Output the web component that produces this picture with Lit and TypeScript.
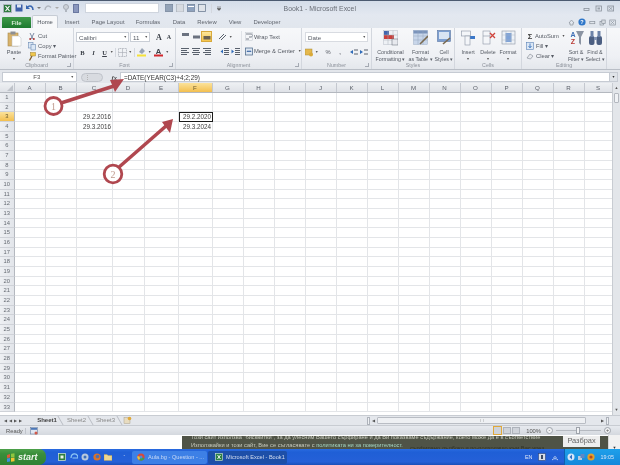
import { LitElement, html, css, svg } from "lit";
import { customElement } from "lit/decorators.js";

const COLS: [string, number][] = [["A",31],["B",31],["C",36],["D",32],["E",34],["F",34],["G",31],["H",31],["I",31],["J",31],["K",31],["L",31],["M",31],["N",31],["O",31],["P",31],["Q",31],["R",31],["S",28]];
const ROWS = Array.from({length:33},(_,i)=>i+1);

@customElement("app-root")
export class AppRoot extends LitElement {
  static styles = css`
    :host { display:block; width:620px; height:465px; overflow:hidden; position:relative; font-family:"Liberation Sans",Arial,sans-serif; font-size:5.8px; color:#555a63; background:#e4e8ee; }
    .shot { width:620px; height:465px; display:flex; flex-direction:column; filter:blur(.3px); }
    svg { display:block; flex:none; }
    .title { height:15px; flex:none; background:linear-gradient(#d4dde9,#e3e8f0); border-top:1px solid #4b5a70; box-sizing:border-box; display:grid; grid-template-columns:1fr 1fr 1fr; align-items:center; padding:0 4px 0 3px; }
    .qat { display:flex; align-items:center; gap:3px; }
    .qatbox { width:72px; height:8px; background:#fff; border:1px solid #cfd5de; margin:0 3px 0 3px; flex:none; }
    .titletext { text-align:center; font-size:6.9px; color:#6a6f78; white-space:nowrap; }
    .winbtns { display:flex; justify-content:flex-end; gap:5px; padding-right:2px; }
    .tabs { height:13px; flex:none; display:flex; align-items:flex-end; background:linear-gradient(#e3e8f0,#e1e6ed); position:relative; font-size:5.9px; }
    .tab { height:13px; display:flex; align-items:center; justify-content:center; color:#5f646d; flex:none; }
    .file { width:29px; background:linear-gradient(#3f9a4a,#1d7a2f); color:#d8eeda; margin:1px 1px 0 2px; height:11px; border-radius:1px 1px 0 0; font-weight:700; }
    .tab.on { background:#f7f8fa; width:26px; border:1px solid #c6ccd5; border-bottom:none; box-sizing:border-box; color:#50555e; border-radius:2px 2px 0 0; }
    .w28 { width:28px; } .w44 { width:44px; } .w36 { width:36px; } .w26 { width:26px; } .w30 { width:30px; } .w38 { width:38px; }
    .tabicons { position:absolute; right:4px; top:3px; display:flex; gap:3px; align-items:center; }
    .ribbon { height:42px; flex:none; display:flex; background:linear-gradient(#f7f8fa,#eef0f4 70%,#e4e7ec); border-bottom:1px solid #b9bec6; box-sizing:border-box; }
    .group { position:relative; border-right:1px solid #d3d7de; flex:none; box-sizing:border-box; display:flex; flex-direction:column; }
    .g-clip { width:74px; } .g-font { width:102px; } .g-align { width:126px; } .g-num { width:70px; } .g-styles { width:83px; } .g-cells { width:67px; } .g-edit { width:85px; }
    .gbody { flex:1; display:flex; min-height:0; padding:2px 0 0; }
    .glabel { height:8px; flex:none; text-align:center; font-size:5.3px; color:#8b9099; line-height:8px; }
    .launch { position:absolute; right:2px; bottom:2px; width:3px; height:3px; border-right:1px solid #a4a9b2; border-bottom:1px solid #a4a9b2; }
    .stack { display:flex; flex-direction:column; flex:none; }
    .row { display:flex; align-items:center; white-space:nowrap; height:10px; flex:none; }
    .big { display:flex; flex-direction:column; align-items:center; text-align:center; line-height:7px; white-space:nowrap; font-size:5.3px; flex:none; }
    .big svg { margin-bottom:3px; }
    .big .arr { line-height:7px; }
    .paste { width:20px; margin:1px 4px 0 4px; font-size:5.6px; }
    .paste svg { margin-bottom:0; }
    .paste span:first-of-type { margin-top:2px; }
    .clipstack { width:44px; padding-top:1px; }
    .clipstack .row svg { margin-right:2px; }
    .font-body { padding:4px 0 0 2px; }
    .combo { height:10px; background:#fff; border:1px solid #c9ced6; box-sizing:border-box; display:flex; align-items:center; justify-content:space-between; padding:0 1px 0 2px; font-size:6.2px; flex:none; }
    .c-font { width:53px; } .c-size { width:20px; margin:0 1px 0 1px; }
    .c-num { width:63px; border-color:#d8dbe1; }
    .arr { font-size:3.5px; color:#555; }
    .b { font-weight:700; font-size:6.5px; width:11px; text-align:center; color:#3b4048; font-family:"Liberation Serif",serif; flex:none; }
    .ga { font-weight:700; color:#3b4048; flex:none; width:10px; text-align:center; font-family:"Liberation Serif",serif; }
    .ga1 { font-size:8px; margin-left:3px; } .ga2 { font-size:6px; }
    .font-r2 { margin-top:5px; padding-left:1px; }
    .sep { width:1px; height:9px; background:#d3d7de; margin:0 2px; flex:none; }
    .mr3 { margin-right:3px; } .mr2 { margin-right:2px; } .ml1 { margin-left:1px; } .ml3 { margin-left:3px; } .ml6 { margin-left:6px; }
    .hl { background:linear-gradient(#fde79b,#f5c54e); border:1px solid #d8a93c; box-sizing:border-box; }
    .al-body { padding:3px 0 0 5px; }
    .al-stack { width:60px; }
    .al-r1 { height:11px; }
    .al-r2 { height:10px; margin-top:4px; }
    .al-hl { width:11px; height:11px; display:flex; align-items:flex-end; justify-content:center; padding-bottom:1px; margin:0 6px 0 1px; flex:none; }
    .al-vsep { width:1px; height:28px; background:#dfe2e7; margin:0 2px 0 0; flex:none; }
    .wrapstack { padding-left:1px; }
    .wrapstack .row { height:11px; }
    .wrapstack .row + .row { height:10px; margin-top:4px; }
    .wrapstack svg { margin-right:1px; }
    .num-body { padding:4px 0 0 3px; }
    .num-r { margin-top:5px; }
    .pct { margin-left:5px; width:9px; flex:none; text-align:center; }
    .comma { margin-left:3px; width:9px; flex:none; font-weight:700; text-align:center; }
    .styles-body { padding:2px 0 0 3px; }
    .s1 { width:31px; } .s2 { width:29px; } .s3 { width:18px; }
    .cells-body { padding:2px 0 0 3px; }
    .cw { width:20px; }
    .ed-body { padding:3px 0 0 4px; }
    .ed-stack { width:41px; }
    .sig { font-size:7.5px; color:#333; width:8px; text-align:center; flex:none; font-weight:700; }
    .ed-stack svg { margin-right:1px; }
    .ed-stack .row svg { width:8px; }
    .ed-big { width:18px; margin-top:-1px; } .ed-big2 { width:20px; margin-top:-1px; }
    .fbar { height:13px; flex:none; display:flex; align-items:center; background:#e3e6eb; padding-top:1px; box-sizing:border-box; }
    .namebox { width:75px; height:10px; margin-left:2px; background:#fff; border:1px solid #c6cbd3; box-sizing:border-box; display:flex; align-items:center; justify-content:space-between; padding:0 2px 0 0; flex:none; }
    .namebox span:first-child { flex:1; text-align:center; font-size:6px; color:#555; }
    .fxzone { width:43px; height:10px; display:flex; align-items:center; justify-content:space-between; padding:0 3px 0 4px; box-sizing:border-box; color:#444; font-family:"Liberation Serif",serif; font-style:italic; font-weight:700; font-size:6.5px; flex:none; }
    .pill { width:22px; height:9px; border-radius:5px; background:#d8dbe0; border:1px solid #bfc3ca; box-sizing:border-box; color:#aaa; font-style:normal; font-size:5px; padding-left:3px; line-height:7px; }
    .formula { flex:1; height:10px; background:#fff; border:1px solid #c6cbd3; box-sizing:border-box; font-size:6.4px; color:#333; display:flex; align-items:center; padding-left:3px; justify-content:space-between; margin-right:2px; }
    .fscroll { width:7px; height:8px; background:#dfe3e8; border-left:1px solid #c6cbd3; font-size:3.5px; text-align:center; line-height:8px; }
    .sheetwrap { display:flex; height:332px; flex:none; background:#fff; }
    .gridcol { width:612px; flex:none; display:flex; flex-direction:column; }
    .heads { display:flex; height:10px; flex:none; background:linear-gradient(#eef0f3,#dfe2e7); border-bottom:1px solid #b4b8bf; box-sizing:border-box; }
    .corner { width:14.5px; flex:none; border-right:1px solid #c4c8cf; box-sizing:border-box; position:relative; }
    .corner::after { content:""; position:absolute; right:1px; bottom:1px; border-left:6px solid transparent; border-bottom:6px solid #bfc3ca; }
    .ch { flex:none; text-align:center; line-height:9px; font-size:6.2px; color:#5a5f68; border-right:1px solid #c4c8cf; box-sizing:border-box; }
    .ch.sel { background:linear-gradient(#fbe29a,#f3bf4f); color:#6b5a2c; }
    .rows { flex:none; display:flex; flex-direction:column; }
    .r { display:flex; height:9.68px; flex:none; }
    .rh { width:14.5px; flex:none; background:linear-gradient(90deg,#eef0f3,#e2e5ea); border-right:1px solid #b4b8bf; border-bottom:1px solid #cfd2d8; box-sizing:border-box; text-align:center; font-size:5.8px; line-height:9.4px; color:#666b73; }
    .rh.sel { background:linear-gradient(#fbe29a,#f3bf4f); color:#6b5a2c; }
    .c { flex:none; border-right:1px solid #e3e5e8; border-bottom:1px solid #e3e5e8; box-sizing:border-box; font-size:6.3px; line-height:9.4px; color:#3c3c3c; text-align:right; padding-right:.5px; white-space:nowrap; }
    .c.active { outline:1.4px solid #1c1c1c; outline-offset:-1px; }
    .vscroll { width:8px; flex:none; background:#e3e6ea; display:flex; flex-direction:column; border-left:1px solid #c8ccd2; box-sizing:border-box; }
    .vup { height:10px; text-align:center; font-size:4px; line-height:10px; color:#555; flex:none; }
    .vthumb { height:10px; margin:0 1px; background:#f0f2f5; border:1px solid #b4b8bf; box-sizing:border-box; flex:none; border-radius:1px; }
    .vfill { flex:1; }
    .tabsrow { height:10px; flex:none; display:flex; align-items:center; background:#e4e7ec; border-top:1px solid #c8ccd2; box-sizing:border-box; font-size:6px; color:#777; }
    .nav { width:34px; letter-spacing:2px; font-size:3.6px; padding-left:4px; box-sizing:border-box; color:#555; flex:none; }
    .sh { width:29px; text-align:center; flex:none; color:#8a8a8a; position:relative; height:9px; line-height:9px; }
    .sh::after { content:""; position:absolute; right:0; top:0; height:9px; border-right:1px solid #b9bdc4; transform:skewX(30deg); }
    .sh.on { color:#444; font-weight:700; width:28px; margin-left:-1px; margin-right:1px; }
    .tabicon { margin-left:3px; }
    .hscroll { margin-left:235px; display:flex; align-items:center; flex:none; width:244px; }
    .split { width:3px; height:8px; background:#eef0f3; border:1px solid #aeb3bb; box-sizing:border-box; flex:none; }
    .harr { width:7px; text-align:center; flex:none; }
    .hthumb { width:209px; height:7px; background:#eef0f3; border:1px solid #b9bdc4; box-sizing:border-box; border-radius:1px; text-align:center; font-size:3px; line-height:5px; color:#888; flex:none; }
    .hgap { width:13px; flex:none; }
    .status { height:10px; flex:none; display:flex; align-items:center; background:linear-gradient(#e7eaef,#d4d8de); border-top:1px solid #c8ccd2; box-sizing:border-box; font-size:5.8px; color:#555; }
    .ready { width:26px; padding-left:6px; box-sizing:border-box; flex:none; border-right:1px solid #c0c4cb; }
    .macro { padding-left:4px; }
    .zoomzone { margin-left:auto; display:flex; align-items:center; gap:1px; padding-right:9px; }
    .vb { width:8px; height:7px; background:#cfd3da; border:1px solid #aeb3bb; box-sizing:border-box; }
    .vb.hl { width:9px; height:9px; border-color:#e0a93a; }
    .pctz { margin:0 4px 0 5px; }
    .slider { width:45px; height:1px; background:#b5b9c0; position:relative; margin:0 2px; }
    .slider::after { content:""; position:absolute; left:20px; top:-3px; width:4px; height:7px; background:#f2f3f5; border:1px solid #9ea3ab; box-sizing:border-box; }
    .round { width:7px; height:7px; border-radius:50%; background:#f0f1f3; border:1px solid #9ea3ab; box-sizing:border-box; text-align:center; line-height:4.5px; font-size:5.5px; }
    .browser { height:15px; flex:none; background:#fff; display:flex; justify-content:flex-end; margin-bottom:-1px; }
    .banner { width:426px; margin-top:1px; flex:none; background:#4f5346; color:#c7cabd; font-size:5.7px; line-height:7px; padding:0 0 0 9px; box-sizing:border-box; position:relative; overflow:hidden; white-space:nowrap; }
    .banner p { margin:0; }
    .banner .t { margin-top:-2px; }
    .banner .m { margin-top:1px; }
    .banner a { color:#a4d6c2; }
    .ghost { position:absolute; left:228px; top:9px; color:#2f3229; }
    .razb { position:absolute; right:8px; top:0; width:37px; height:11px; background:#eeeeee; color:#666; font-size:7.4px; text-align:center; line-height:10px; }
    .bscroll { width:12px; flex:none; background:#f1f1f1; border-left:1px solid #d5d5d5; box-sizing:border-box; font-size:4px; line-height:26px; text-align:center; color:#333; }
    .taskbar { height:16px; flex:none; display:flex; align-items:center; background:linear-gradient(#2a6be0,#1f5fd6 20%,#2560d8 80%,#1a4fb8); color:#dbe6f8; position:relative; }
    .start { width:46px; height:16px; flex:none; background:linear-gradient(#4da14a,#3a8e3a 30%,#2f8133); border-radius:0 7px 7px 0; box-sizing:border-box; display:flex; align-items:center; gap:3px; padding-left:6px; color:#eef6ea; font-style:italic; font-weight:700; font-size:9px; }
    .ql { display:flex; align-items:center; gap:3.5px; margin-left:12px; width:74px; flex:none; }
    .caret { margin-left:8px; font-size:5px; color:#a9c2ee; }
    .tb { height:13px; flex:none; display:flex; align-items:center; gap:3px; font-size:5.6px; padding-left:5px; box-sizing:border-box; border-radius:2px; white-space:nowrap; }
    .tb.a { width:75px; background:#3d80e6; margin-right:1px; color:#c8d8f5; }
    .tb.b2 { width:79px; background:#1d4fa8; color:#d5def0; padding-left:7px; }
    .tray { margin-left:auto; height:16px; display:flex; align-items:center; gap:5px; font-size:5.4px; }
    .trayin { height:16px; display:flex; align-items:center; gap:2px; background:linear-gradient(#1ea0ea,#1487db); padding:0 6px 0 2px; border-left:1px solid #0e5fb0; }
    .clock { margin-left:4px; }
    .overlay { position:absolute; left:0; top:0; width:620px; height:465px; pointer-events:none; filter:blur(.3px); }
    .num { font-family:"Liberation Serif",serif; font-size:10px; fill:#bf9a8e; text-anchor:middle; }
  `;

  ic(inner: unknown, w = 10, h = 10) {
    return html`<svg width=${w} height=${h} viewBox="0 0 ${w} ${h}">${inner}</svg>`;
  }

  render() {
    return html`
    <div class="shot">
      <div class="title">
        <div class="qat">
          ${this.ic(svg`<rect x=".5" y=".5" width="8" height="8" fill="#2c7a3e" stroke="#aeb7c0"/><path d="M2.5 2l4 5M6.5 2l-4 5" stroke="#fff" stroke-width="1.2"/>`,9,9)}
          ${this.ic(svg`<rect x=".5" y=".5" width="7" height="7" fill="#3d5fa8"/><rect x="2" y=".5" width="4" height="3" fill="#dfe7f2"/>`,8,8)}
          ${this.ic(svg`<path d="M1 3.5c3-3 6-1 6 2.5" fill="none" stroke="#3765b0" stroke-width="1.6"/><path d="M0 1v4h4z" fill="#3765b0"/>`,8,8)}
          ${this.ic(svg`<path d="M0 1h4L2 3z" fill="#777"/>`,4,4)}
          ${this.ic(svg`<path d="M7 3.5c-3-3-6-1-6 2.5" fill="none" stroke="#b0b6bf" stroke-width="1.4"/>`,8,8)}
          ${this.ic(svg`<path d="M0 1h4L2 3z" fill="#aaa"/>`,4,4)}
          ${this.ic(svg`<circle cx="4" cy="3" r="2.5" fill="#cdd2d9" stroke="#a5abb4"/><rect x="3" y="5" width="2" height="3" fill="#b0b6bf"/>`,8,8)}
          ${this.ic(svg`<rect x=".5" y=".5" width="5" height="8" fill="#8a97bd" stroke="#6a78a0"/>`,6,9)}
          <div class="qatbox"></div>
          ${this.ic(svg`<rect width="8" height="7" y=".5" fill="#93a3b8" stroke="#6f7f95" stroke-width=".7"/>`,8,8)}
          ${this.ic(svg`<rect width="7" height="8" x=".5" fill="#d7dbe1" stroke="#a9afb8" stroke-width=".7"/>`,8,8)}
          ${this.ic(svg`<rect width="8" height="7" y=".5" fill="#8ea2be" stroke="#6f7f95" stroke-width=".7"/><rect x="1" y="2" width="6" height="1" fill="#fff"/>`,8,8)}
          ${this.ic(svg`<rect width="7" height="7" x=".5" y=".5" fill="#dfe3e9" stroke="#6f7f95" stroke-width=".8"/>`,8,8)}
          <div class="sep"></div>
          ${this.ic(svg`<path d="M0 2h4M0 3.4l2 2 2-2z" fill="#555" stroke="#555" stroke-width=".5"/>`,4,6)}
        </div>
        <div class="titletext">Book1 - Microsoft Excel</div>
        <div class="winbtns">
          ${this.ic(svg`<rect x="1" y="3.5" width="5" height="2" fill="none" stroke="#8a929c" stroke-width=".8"/>`,7,7)}
          ${this.ic(svg`<rect x="1" y="1" width="5.5" height="5" fill="none" stroke="#8a929c" stroke-width=".8"/><rect x="2.5" y="2.5" width="2.5" height="2" fill="#9aa2ac"/>`,7,7)}
          ${this.ic(svg`<rect x=".8" y="1" width="5.8" height="5" fill="none" stroke="#8a929c" stroke-width=".8"/><path d="M2 2l3.5 3M5.5 2l-3.5 3" stroke="#8a929c" stroke-width=".7"/>`,7,7)}
        </div>
      </div>
      <div class="tabs">
        <div class="tab file">File</div>
        <div class="tab on">Home</div>
        <div class="tab w28">Insert</div>
        <div class="tab w44">Page Layout</div>
        <div class="tab w36">Formulas</div>
        <div class="tab w26">Data</div>
        <div class="tab w30">Review</div>
        <div class="tab w26">View</div>
        <div class="tab w38">Developer</div>
        <div class="tabicons">
          ${this.ic(svg`<path d="M3.5 1L1 4h1v2h3V4h1z" fill="none" stroke="#8a929c" stroke-width=".7"/>`,7,7)}
          ${this.ic(svg`<circle cx="4" cy="4" r="3.6" fill="#2e76c9"/><text x="4" y="6" font-size="5.5" font-weight="700" fill="#fff" text-anchor="middle" font-family="Liberation Sans">?</text>`,8,8)}
          ${this.ic(svg`<rect x=".8" y="2.5" width="5" height="2.2" fill="none" stroke="#8a929c" stroke-width=".7"/>`,7,7)}
          ${this.ic(svg`<rect x="1" y="2.5" width="3.5" height="3.5" fill="none" stroke="#8a929c" stroke-width=".7"/><rect x="2.8" y="1" width="3.4" height="3.4" fill="#d8dce2" stroke="#8a929c" stroke-width=".7"/>`,7,7)}
          ${this.ic(svg`<rect x=".8" y="1" width="5.5" height="5" fill="none" stroke="#8a929c" stroke-width=".7"/><path d="M2 2l3 3M5 2l-3 3" stroke="#8a929c" stroke-width=".6"/>`,7,7)}
        </div>
      </div>
      <div class="ribbon">
        <div class="group g-clip">
          <div class="gbody">
            <div class="big paste">
              ${this.ic(svg`<rect x="1" y="2" width="10" height="13" fill="#d8b36c" stroke="#a98a4e" stroke-width=".6"/><rect x="3.5" y="0.5" width="5" height="3" fill="#8d8f94"/><path d="M5 5h7l2 2v8H5z" fill="#fff" stroke="#b8bcc2" stroke-width=".5"/>`,15,16)}
              <span>Paste</span><span class="arr">▼</span>
            </div>
            <div class="stack clipstack">
              <div class="row">${this.ic(svg`<path d="M2 1l3 6M6 1L3 7" stroke="#6f7f9c" stroke-width=".9"/><circle cx="2.2" cy="7" r="1" fill="#a33"/><circle cx="5.8" cy="7" r="1" fill="#a33"/>`,8,9)}<span>Cut</span></div>
              <div class="row">${this.ic(svg`<rect x=".5" y=".5" width="4.5" height="5.5" fill="#dbe7f5" stroke="#6d8cb5" stroke-width=".6"/><rect x="3" y="2.5" width="4.5" height="5.5" fill="#dbe7f5" stroke="#6d8cb5" stroke-width=".6"/>`,8,9)}<span>Copy ▾</span></div>
              <div class="row">${this.ic(svg`<rect x="2.5" y=".5" width="5" height="3.5" fill="#f0c64c" stroke="#a3842a" stroke-width=".5"/><path d="M4 4L1.5 8.5" stroke="#7b5b2c" stroke-width="1.3"/>`,8,9)}<span>Format Painter</span></div>
            </div>
          </div>
          <div class="glabel">Clipboard</div><div class="launch"></div>
        </div>
        <div class="group g-font">
          <div class="gbody font-body">
            <div class="stack">
              <div class="row">
                <div class="combo c-font"><span>Calibri</span><span class="arr">▼</span></div>
                <div class="combo c-size"><span>11</span><span class="arr">▼</span></div>
                <span class="ga ga1">A</span><span class="ga ga2">A</span>
              </div>
              <div class="row font-r2">
                <span class="b">B</span><span class="b"><i>I</i></span><span class="b"><u>U</u></span><span class="arr">▼</span><div class="sep"></div>
                ${this.ic(svg`<rect x=".5" y=".5" width="8" height="8" fill="none" stroke="#a4a9b2" stroke-dasharray="1 .6" stroke-width=".8"/><path d="M4.5 .5v8M.5 4.5h8" stroke="#a4a9b2" stroke-width=".6"/>`,9,9)}
                <span class="arr ml1">▼</span><div class="sep"></div>
                ${this.ic(svg`<path d="M2 5l3-4 3 3-3 3z" fill="#9aa5b5"/><rect x="0" y="7.5" width="9" height="2" fill="#f5e23a"/>`,10,10)}
                <span class="arr ml1 mr3">▼</span>
                ${this.ic(svg`<text x="4.5" y="7" font-size="7.5" font-weight="700" fill="#3c4048" text-anchor="middle" font-family="Liberation Sans">A</text><rect x="0" y="7.5" width="9" height="2" fill="#d2262c"/>`,10,10)}
                <span class="arr ml1">▼</span>
              </div>
            </div>
          </div>
          <div class="glabel">Font</div><div class="launch"></div>
        </div>
        <div class="group g-align">
          <div class="gbody al-body">
            <div class="stack al-stack">
              <div class="row al-r1">
                ${this.ic(svg`<rect x="1" y="1" width="7" height="3" fill="#6b7280"/>`,8,10)}
                <span class="ml3"></span>
                ${this.ic(svg`<rect x="1" y="3.5" width="7" height="3" fill="#6b7280"/>`,8,10)}
                <div class="hl al-hl ml1">${this.ic(svg`<rect x=".5" y="2" width="7" height="3.5" fill="#6b6252"/>`,8,6)}</div>
                ${this.ic(svg`<path d="M1 7l5-5M3 8l5-5" stroke="#59616d" stroke-width="1"/>`,10,9)}<span class="arr ml1">▼</span>
              </div>
              <div class="row al-r2">
                ${[0,1,2].map(i=>html`${this.ic(svg`<path d="M0 1.5h8M${i==0?0:i==1?1:2} 3.5h6M0 5.5h8M${i==0?0:i==1?1:2} 7.5h6" stroke="#59616d" stroke-width="1"/>`,8,9)}<span class="ml3"></span>`)}
                <span class="ml6"></span>
                ${this.ic(svg`<path d="M4 1.5h5M4 3.5h5M4 5.5h5M4 7.5h5" stroke="#59616d" stroke-width="1"/><path d="M3 2.5L.5 4.5 3 6.5z" fill="#2f6bb8"/>`,10,9)}
                <span class="ml1"></span>
                ${this.ic(svg`<path d="M4 1.5h5M4 3.5h5M4 5.5h5M4 7.5h5" stroke="#59616d" stroke-width="1"/><path d="M.5 2.5L3 4.5.5 6.5z" fill="#2f6bb8"/>`,10,9)}
              </div>
            </div>
            <div class="al-vsep"></div>
            <div class="stack wrapstack">
              <div class="row">${this.ic(svg`<path d="M1 2h5c2 0 2 3 0 3H4" fill="none" stroke="#6e7580" stroke-width=".9"/><path d="M1 7h3" stroke="#6e7580" stroke-width=".9"/><rect x=".5" y=".5" width="7" height="8" fill="none" stroke="#c0c5cd" stroke-width=".5"/>`,8,9)}<span>Wrap Text</span></div>
              <div class="row">${this.ic(svg`<rect x=".5" y="1" width="7" height="7" fill="#dde6f2" stroke="#55708f" stroke-width=".8"/><path d="M2 4.5h4M2 4.5l1.2-1.2M6 4.5L4.8 3.3" stroke="#2c5a9c" stroke-width=".8"/>`,8,9)}<span>Merge &amp; Center</span><span class="arr ml3">▼</span></div>
            </div>
          </div>
          <div class="glabel">Alignment</div><div class="launch"></div>
        </div>
        <div class="group g-num">
          <div class="gbody num-body">
            <div class="stack">
              <div class="combo c-num"><span>Date</span><span class="arr">▼</span></div>
              <div class="row num-r">
                ${this.ic(svg`<rect x="0" y="1" width="7" height="6" fill="#e5b84c" stroke="#a98a3a" stroke-width=".5"/><circle cx="6" cy="6.5" r="2" fill="#d9a938"/>`,9,9)}<span class="arr ml1">▼</span>
                <span class="pct">%</span><span class="comma">,</span>
                <span class="ml6"></span>
                ${this.ic(svg`<path d="M4 2h4M4 6h4" stroke="#59616d" stroke-width="1"/><path d="M3 2L0 4l3 2z" fill="#2f6bb8"/>`,9,8)}
                <span class="ml1"></span>
                ${this.ic(svg`<path d="M4 2h4M4 6h4" stroke="#59616d" stroke-width="1"/><path d="M0 2l3 2-3 2z" fill="#2f6bb8"/>`,9,8)}
              </div>
            </div>
          </div>
          <div class="glabel">Number</div><div class="launch"></div>
        </div>
        <div class="group g-styles">
          <div class="gbody styles-body">
            <div class="big s1">${this.ic(svg`<rect x=".5" y=".5" width="14" height="14" fill="#eef1f5" stroke="#b5bcc6" stroke-width=".5"/><rect x="1" y="1" width="5" height="4" fill="#4165ad"/><rect x="6" y="5" width="5" height="4" fill="#c9403c"/><rect x="1" y="5" width="5" height="4" fill="#c9403c"/><path d="M5 .5v14M10 .5v14M.5 5h14M.5 10h14" stroke="#a9b0bb" stroke-width=".5"/><rect x="9" y="9" width="6" height="6" fill="#e7e9ee" stroke="#5e6672" stroke-width=".5"/>`,15,16)}<span>Conditional</span><span>Formatting ▾</span></div>
            <div class="big s2">${this.ic(svg`<rect x=".5" y=".5" width="14" height="14" fill="#c8d6ea" stroke="#9fafc5" stroke-width=".5"/><rect x=".5" y=".5" width="14" height="3" fill="#7b94bb"/><path d="M5 .5v14M10 .5v14M.5 6h14M.5 10h14" stroke="#95a6be" stroke-width=".5"/><path d="M7 14l8-8" stroke="#7a6a50" stroke-width="1.6"/>`,15,16)}<span>Format</span><span>as Table ▾</span></div>
            <div class="big s3">${this.ic(svg`<rect x=".5" y=".5" width="13" height="11" fill="#7c9ed0" stroke="#5b77a3" stroke-width=".6"/><rect x="2" y="2" width="10" height="7" fill="#d9e4f3"/><path d="M6 14l7-6" stroke="#7a6a50" stroke-width="1.6"/>`,15,16)}<span>Cell</span><span>Styles ▾</span></div>
          </div>
          <div class="glabel">Styles</div>
        </div>
        <div class="group g-cells">
          <div class="gbody cells-body">
            <div class="big cw">${this.ic(svg`<rect x="0.5" y="1" width="9" height="5" fill="#f4f6f9" stroke="#8a94a3" stroke-width=".6"/><rect x="9" y="6" width="5" height="3" fill="#3b78c9"/><rect x="4" y="6" width="5" height="9" fill="#f4f6f9" stroke="#8a94a3" stroke-width=".6"/>`,15,16)}<span>Insert</span><span class="arr">▼</span></div>
            <div class="big cw">${this.ic(svg`<rect x="2" y="1" width="7" height="13" fill="#f4f6f9" stroke="#8a94a3" stroke-width=".6"/><path d="M2 6h7" stroke="#8a94a3" stroke-width=".6"/><path d="M9 3l5 5M14 3l-5 5" stroke="#d0443c" stroke-width="1.3"/>`,15,16)}<span>Delete</span><span class="arr">▼</span></div>
            <div class="big cw">${this.ic(svg`<rect x="1" y="1" width="13" height="13" fill="#eef2f7" stroke="#8a94a3" stroke-width=".6"/><rect x="4.5" y="3" width="6" height="9" fill="#7fa3d8"/><path d="M1 5h13M1 10h13M5 1v13M10 1v13" stroke="#a9b2bf" stroke-width=".4"/>`,15,16)}<span>Format</span><span class="arr">▼</span></div>
          </div>
          <div class="glabel">Cells</div>
        </div>
        <div class="group g-edit">
          <div class="gbody ed-body">
            <div class="stack ed-stack">
              <div class="row"><span class="sig">Σ</span><span class="ml1">AutoSum</span><span class="arr ml3">▼</span></div>
              <div class="row">${this.ic(svg`<rect x=".5" y=".5" width="7" height="7" fill="#dbe7f5" stroke="#5a82b8" stroke-width=".6"/><path d="M4 1.5v4M2.5 4L4 5.8 5.5 4" stroke="#2f6bb8" fill="none" stroke-width=".8"/>`,8,8)}<span class="ml1">Fill ▾</span></div>
              <div class="row">${this.ic(svg`<path d="M1 6l3-4 3 2-2.5 3z" fill="#e8eaee" stroke="#7d8490" stroke-width=".6"/>`,8,8)}<span class="ml1">Clear ▾</span></div>
            </div>
            <div class="big ed-big">${this.ic(svg`<text x="4" y="7" font-size="7" font-weight="700" fill="#3f6fb5" text-anchor="middle" font-family="Liberation Sans">A</text><text x="4" y="14" font-size="7" font-weight="700" fill="#b93a35" text-anchor="middle" font-family="Liberation Sans">Z</text><path d="M7 1h8l-3 6v8l-2-2V7z" fill="#8b94a3"/>`,15,16)}<span>Sort &amp;</span><span>Filter ▾</span></div>
            <div class="big ed-big2">${this.ic(svg`<rect x="1" y="6" width="5.5" height="9" rx="2" fill="#4c5f82"/><rect x="8.5" y="6" width="5.5" height="9" rx="2" fill="#4c5f82"/><rect x="2.5" y="1" width="3" height="6" fill="#6c82a8"/><rect x="9.5" y="1" width="3" height="6" fill="#6c82a8"/><rect x="6" y="7" width="3" height="3" fill="#8294b5"/>`,15,16)}<span>Find &amp;</span><span>Select ▾</span></div>
          </div>
          <div class="glabel">Editing</div>
        </div>
      </div>
      <div class="fbar">
        <div class="namebox"><span>F3</span><span class="arr">▼</span></div>
        <div class="fxzone"><span class="pill">⋮</span><span>fx</span></div>
        <div class="formula"><span>=DATE(YEAR(C3)+4;2;29)</span><span class="fscroll">▼</span></div>
      </div>
      <div class="sheetwrap">
        <div class="gridcol">
          <div class="heads">
            <div class="corner"></div>
            ${COLS.map(([n,w])=>html`<div class="ch ${n==="F"?"sel":""}" style="width:${w}px">${n}</div>`)}
          </div>
          <div class="rows">
            ${ROWS.map(r=>html`<div class="r">
              <div class="rh ${r===3?"sel":""}">${r}</div>
              ${COLS.map(([n,w])=>{
                let t="";
                if(n==="C"&&r===3)t="29.2.2016";
                if(n==="C"&&r===4)t="29.3.2016";
                if(n==="F"&&r===3)t="29.2.2020";
                if(n==="F"&&r===4)t="29.3.2024";
                return html`<div class="c ${n==="F"&&r===3?"active":""}" style="width:${w}px">${t}</div>`;
              })}
            </div>`)}
          </div>
        </div>
        <div class="vscroll">
          <div class="vup">▲</div><div class="vthumb"></div><div class="vfill"></div><div class="vup">▼</div>
        </div>
      </div>
      <div class="tabsrow">
        <div class="nav">◀◀▶▶</div>
        <div class="sh on">Sheet1</div><div class="sh">Sheet2</div><div class="sh">Sheet3</div>
        <div class="tabicon">${this.ic(svg`<rect x="1" y="1.5" width="6" height="6" fill="#e8dcc0" stroke="#a7a08c" stroke-width=".5"/><circle cx="6.5" cy="2.5" r="1.8" fill="#e0a93a"/>`,9,9)}</div>
        <div class="hscroll">
          <div class="split"></div><span class="arr harr">◀</span><div class="hthumb">⋮⋮</div><div class="hgap"></div><span class="arr harr">▶</span><div class="split"></div>
        </div>
      </div>
      <div class="status">
        <div class="ready">Ready</div>
        <div class="macro">${this.ic(svg`<rect x=".5" y=".5" width="7" height="6.5" fill="#dfe6f1" stroke="#6a7f9f" stroke-width=".6"/><rect x="1" y="1" width="6" height="1.8" fill="#4c78b8"/><circle cx="6" cy="6" r="1.5" fill="#d25a4a"/>`,9,8)}</div>
        <div class="zoomzone">
          <div class="vb hl"></div><div class="vb"></div><div class="vb"></div>
          <span class="pctz">100%</span>
          <div class="round">-</div><div class="slider"></div><div class="round">+</div>
        </div>
      </div>
      <div class="browser">
        <div class="banner">
          <p class="t">Този сайт използва "бисквитки", за да улесним Вашето сърфиране и да Ви показваме съдържание, което може да е в съответствие</p>
          <p class="m">Използвайки и този сайт, Вие се съгласявате с <a>политиката ни за поверителност.</a></p>
          <div class="ghost">сърфирано дълбоко и по-подходящо към Вас чрез</div>
          <div class="razb">Разбрах</div>
        </div>
        <div class="bscroll">▼</div>
      </div>
      <div class="taskbar">
        <div class="start">
          ${this.ic(svg`<path d="M1 2l3-1v3.5L1 5z" fill="#e0573a"/><path d="M5 .8l3.5-.6v3.8L5 4.5z" fill="#8ec63f"/><path d="M1 5.5l3-.5v3.5L1 9z" fill="#3d8fe0"/><path d="M5 5l3.5-.5v3.8L5 8.8z" fill="#f4c430"/>`,9,9)}
          <span>start</span>
        </div>
        <div class="ql">
          ${this.ic(svg`<rect x=".5" y=".5" width="7" height="7" fill="#2e7e3d" stroke="#d8ead8" stroke-width=".7"/><rect x="2.5" y="2.5" width="3" height="3" fill="#eaf5ea"/>`,8,8)}
          ${this.ic(svg`<path d="M1 5c0-6 7-5 7 0H2.5" fill="none" stroke="#8fc8f5" stroke-width="1.2"/>`,8,8)}
          ${this.ic(svg`<circle cx="4" cy="4" r="3.5" fill="#b9c9dd"/><circle cx="4" cy="4" r="1.5" fill="#3c6fbb"/>`,8,8)}
          ${this.ic(svg`<circle cx="4" cy="4" r="3.6" fill="#d9722a"/><circle cx="4.5" cy="3.5" r="1.8" fill="#4d6fb0"/>`,8,8)}
          ${this.ic(svg`<path d="M0 1.5h3l1 1h4v5H0z" fill="#ecd68f" stroke="#b89c4a" stroke-width=".4"/>`,8,8)}
          <span class="caret">ˆ</span>
        </div>
        <div class="tb a">
          ${this.ic(svg`<circle cx="4" cy="4" r="3.6" fill="#d8483a"/><path d="M4 4L7.5 5.5A3.6 3.6 0 0 1 2 7z" fill="#3da34d"/><path d="M4 4L2 7A3.6 3.6 0 0 1 .5 3z" fill="#e8c33a"/><circle cx="4" cy="4" r="1.5" fill="#4a8be0"/>`,8,8)}
          <span>Aula.bg - Question - ...</span>
        </div>
        <div class="tb b2">
          ${this.ic(svg`<rect x=".5" y=".5" width="7" height="7" fill="#2c8045" stroke="#d7ebd9" stroke-width=".6"/><path d="M2.5 2l3 4M5.5 2l-3 4" stroke="#fff" stroke-width=".9"/>`,8,8)}
          <span>Microsoft Excel - Book1</span>
        </div>
        <div class="tray">
          <span>EN</span>
          ${this.ic(svg`<rect x=".5" y=".5" width="7" height="7" fill="#d7dde6" stroke="#28427a" stroke-width=".6"/><rect x="3" y="2" width="2" height="4" fill="#3b4a63"/>`,8,8)}
          ${this.ic(svg`<path d="M1 6a4 4 0 0 1 6 0M2.5 3.5a2 2 0 0 1 3 0" fill="none" stroke="#dfe8f6" stroke-width=".8"/>`,8,7)}
          <div class="trayin">
            ${this.ic(svg`<circle cx="4" cy="4" r="3.5" fill="#d7e6f8"/><path d="M5 1.5L2.5 4 5 6.5z" fill="#2c6fc6"/>`,8,8)}
            ${this.ic(svg`<rect x="1" y="3" width="4" height="4" fill="#b9c9dd"/><rect x="3.5" y="1" width="4" height="4" fill="#5d88c6"/>`,8,8)}
            ${this.ic(svg`<circle cx="4" cy="4" r="3.6" fill="#e3a02c"/><circle cx="4" cy="4" r="1.6" fill="#b44a22"/>`,8,8)}
            <span class="clock">19:05</span>
          </div>
        </div>
      </div>
    </div>
    <svg class="overlay" viewBox="0 0 620 465">
      <g fill="none" stroke="#b0474f" stroke-width="3.5" stroke-linecap="round">
        <path d="M61 103L114 86"/>
        <path d="M118 168L166 126"/>
      </g>
      <path d="M124 79L110 80L115 92z" fill="#b0474f"/>
      <path d="M173 119L162 122L170 133z" fill="#b0474f"/>
      <circle cx="53.5" cy="106" r="8.5" fill="#fff" stroke="#b0474f" stroke-width="2.8"/>
      <text class="num" x="53.5" y="109.5">1</text>
      <circle cx="113" cy="174" r="8.8" fill="#fff" stroke="#b0474f" stroke-width="2.8"/>
      <text class="num" x="113" y="177.5">2</text>
    </svg>`;
  }
}
